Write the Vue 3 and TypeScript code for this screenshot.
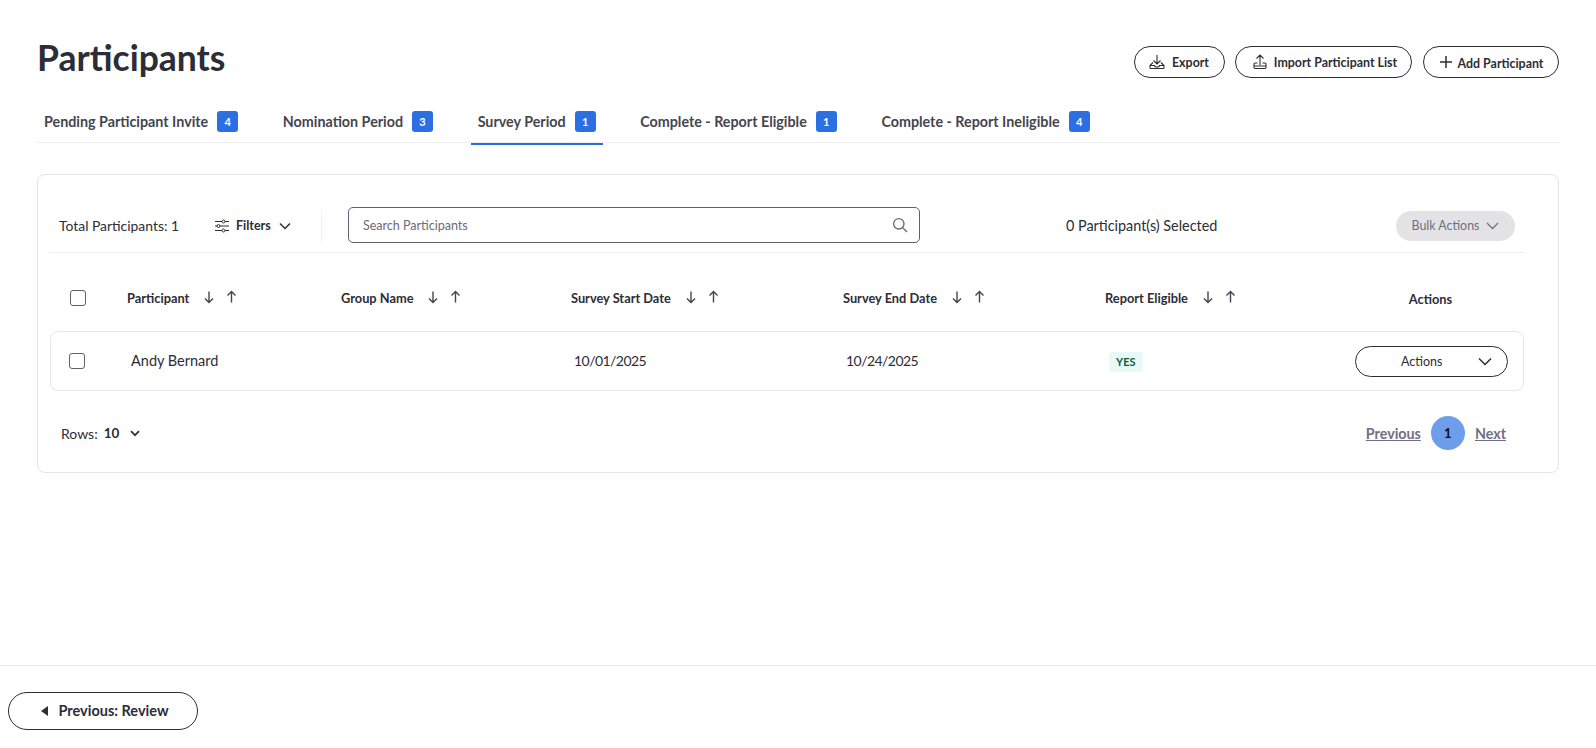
<script setup lang="ts">
const tabs = [
  { label: 'Pending Participant Invite', count: 4 },
  { label: 'Nomination Period', count: 3 },
  { label: 'Survey Period', count: 1, active: true },
  { label: 'Complete - Report Eligible', count: 1 },
  { label: 'Complete - Report Ineligible', count: 4 },
]
const columns = ['Participant', 'Group Name', 'Survey Start Date', 'Survey End Date', 'Report Eligible']
</script>

<template>
  <div class="page">
    <main class="content">
      <header class="top">
        <h1>Participants</h1>
        <div class="top-actions">
          <button class="pill export">
            <svg width="18" height="18" viewBox="0 0 18 18" fill="none" stroke="currentColor" stroke-width="1.1"><path d="M9 2v9M5.500 7.500 9 11l3.500-3.500M5 9.500 2 12.500v2.200c0 .5.300.8.800.8h12.400c.5 0 .8-.3.800-.8v-2.200l-3-3M2 12.500h4.500c0 1 1 1.500 2.500 1.500s2.500-.5 2.500-1.500H16"/></svg>
            Export
          </button>
          <button class="pill import">
            <svg width="18" height="18" viewBox="0 0 18 18" fill="none" stroke="currentColor" stroke-width="1.1"><path d="M9 12V2M5.500 5.500 9 2l3.500 3.500M6.500 10H4.200C3.500 10 3 10.500 3 11.200v3.100c0 .7.500 1.200 1.200 1.200h9.600c.7 0 1.200-.5 1.200-1.200v-3.100c0-.7-.5-1.200-1.200-1.200h-2.300M3 13h12"/></svg>
            Import Participant List
          </button>
          <button class="pill add">
            <svg width="14" height="14" viewBox="0 0 14 14" fill="none" stroke="currentColor" stroke-width="1.500"><path d="M7 1v12M1 7h12"/></svg>
            <span>Add Participant</span>
          </button>
        </div>
      </header>

      <nav class="tabs">
        <div v-for="t in tabs" :key="t.label" class="tab" :class="{ active: t.active }">
          <span>{{ t.label }}</span>
          <span class="count">{{ t.count }}</span>
        </div>
      </nav>

      <section class="card">
        <div class="toolbar">
          <span class="total">Total Participants: 1</span>
          <button class="filters">
            <svg width="16" height="16" viewBox="0 0 16 16" fill="none" stroke="currentColor" stroke-width="1"><path d="M1 3.500h7M11 3.500h4M1 8h2M6 8h9M1 12.500h7M11 12.500h4"/><circle cx="9.500" cy="3.500" r="1.500"/><circle cx="4.500" cy="8" r="1.500"/><circle cx="9.500" cy="12.500" r="1.500"/></svg>
            Filters
            <svg class="filter-caret" width="12" height="8" viewBox="0 0 12 8" fill="none" stroke="currentColor" stroke-width="1.500"><path d="m1 1.500 5 5 5-5"/></svg>
          </button>
          <span class="divider"></span>
          <div class="search">
            <span class="placeholder">Search Participants</span>
            <svg width="16" height="16" viewBox="0 0 16 16" fill="none" stroke="#6b6b7b" stroke-width="1.400"><circle cx="6.800" cy="6.800" r="5.200"/><path d="m10.700 10.700 4.300 4.300"/></svg>
          </div>
          <span class="selected">0 Participant(s) Selected</span>
          <button class="bulk">
            Bulk Actions
            <svg width="13" height="8" viewBox="0 0 13 8" fill="none" stroke="currentColor" stroke-width="1.300"><path d="m1 1 5.500 5.500L12 1"/></svg>
          </button>
        </div>

        <div class="grid head">
          <span class="box head-box"></span>
          <div v-for="c in columns" :key="c" class="th">
            <span>{{ c }}</span>
            <svg width="33" height="14" viewBox="0 0 33 14" fill="none" stroke="#44444f" stroke-width="1.400"><path d="M5 1.500v11M1 8.500l4 4 4-4M27.500 12.500v-11M23.500 5.500l4-4 4 4"/></svg>
          </div>
          <span class="th actions-th">Actions</span>
        </div>

        <div class="grid row">
          <span class="box"></span>
          <span class="name">Andy Bernard</span>
          <span></span>
          <span class="date">10/01/2025</span>
          <span class="date">10/24/2025</span>
          <span><span class="yes">YES</span></span>
          <div class="actions-cell">
            <button class="actions">
              <span>Actions</span>
              <svg width="14" height="9" viewBox="0 0 14 9" fill="none" stroke="currentColor" stroke-width="1.500"><path d="m1 1.500 6 6 6-6"/></svg>
            </button>
          </div>
        </div>

        <div class="pager-row">
          <div class="rows">
            <span>Rows:</span>
            <b>10</b>
            <svg width="10" height="7" viewBox="0 0 10 7" fill="none" stroke="#33333d" stroke-width="1.800"><path d="m1 1.200 4 4 4-4"/></svg>
          </div>
          <div class="pager">
            <a>Previous</a>
            <span class="page-num">1</span>
            <a>Next</a>
          </div>
        </div>
      </section>
    </main>

    <footer class="footer">
      <button class="prev">
        <svg width="8" height="10" viewBox="0 0 8 10" fill="currentColor"><path d="M7 0v10L0 5z"/></svg>
        <span>Previous: Review</span>
      </button>
    </footer>
  </div>
</template>

<style>
html, body { margin: 0; background: #fff; }
</style>

<style scoped>
.page {
  width: 1596px;
  height: 748px;
  display: flex;
  flex-direction: column;
  justify-content: space-between;
  font-family: Lato, "Open Sans", sans-serif;
  color: #2c2d36;
  overflow: hidden;
}
button { font-family: inherit; background: #fff; color: inherit; cursor: pointer; }
.content { padding: 36px 37px 0; }
.top { display: flex; justify-content: space-between; align-items: flex-start; height: 66px; }
h1 { margin: 0; font-size: 35.500px; line-height: 44px; font-weight: 700; color: #2c2d36; }
.top-actions { display: flex; gap: 10px; margin-top: 10px; }
.top-actions .add { margin-left: 1px; }
.pill {
  height: 32px;
  border: 1px solid #2c2d36;
  border-radius: 16px;
  display: flex;
  align-items: center;
  justify-content: center;
  gap: 8px;
  font-size: 12.400px;
  font-weight: 700;
  padding: 0;
}
.export { width: 91px; gap: 6px; padding-right: 2px; }
.import { width: 177px; gap: 5px; padding-left: 1px; }
.add { width: 136px; gap: 5px; }
.add span { padding-top: 2px; }
.tabs {
  display: flex;
  height: 40px;
  border-bottom: 1px solid #eeeef0;
  padding-left: 7px;
  box-sizing: content-box;
}
.tab {
  display: flex;
  align-items: center;
  gap: 9px;
  height: 42px;
  font-size: 14.300px;
  font-weight: 700;
  color: #44454f;
  box-sizing: border-box;
  margin-right: 44.600px;
  padding-bottom: 4px;
  position: relative;
}
.tab.active::after {
  content: "";
  position: absolute;
  left: -7px;
  right: -7px;
  bottom: -1px;
  height: 2px;
  background: #2a6fdb;
}
.count {
  width: 21px;
  height: 21px;
  background: #2c6fe3;
  color: #fff;
  border-radius: 3px;
  font-size: 11px;
  font-weight: 700;
  display: flex;
  align-items: center;
  justify-content: center;
}
.card {
  margin-top: 31px;
  height: 299px;
  box-sizing: border-box;
  border: 1px solid #e4e4e7;
  border-radius: 8px;
  padding: 0 11px;
}
.toolbar {
  display: flex;
  align-items: center;
  height: 78px;
  padding-top: 24px;
  box-sizing: border-box;
  border-bottom: 1px solid #f0f0f2;
  width: 1476px;
  font-size: 13.900px;
}
.total { margin-left: 10px; width: 155px; }
.filters {
  display: flex;
  align-items: center;
  border: 0;
  padding: 0;
  font-size: 12.500px;
  font-weight: 700;
  gap: 6px;
  width: 107px;
}
.filter-caret { margin-left: 2px; }
.divider { width: 1px; height: 32px; background: #f0f0f2; margin-right: 26px; }
.search {
  width: 572px;
  height: 36px;
  margin-top: -2px;
  box-sizing: border-box;
  border: 1px solid #5f5f72;
  border-radius: 5px;
  display: flex;
  align-items: center;
  justify-content: space-between;
  padding: 0 11px 0 14px;
  font-size: 12.500px;
  color: #6b6b7b;
}
.placeholder { padding-top: 2px; }
.selected { margin-left: 146px; font-size: 14.400px; width: 330px; }
.bulk {
  width: 119px;
  height: 30px;
  border: 0;
  border-radius: 15px;
  background: #e3e3e6;
  color: #6f6f7f;
  font-size: 12.400px;
  display: flex;
  align-items: center;
  justify-content: center;
  gap: 7px;
  padding: 0;
}
.grid {
  display: grid;
  grid-template-columns: 77px 214px 230px 272px 262px 200px 1fr;
  align-items: center;
  width: 1474px;
  box-sizing: border-box;
  margin-left: 1px;
}
.head { height: 78px; padding-top: 12px; }
.head-box { margin-left: 20px; }
.box {
  width: 16px;
  height: 16px;
  border: 1px solid #5f5f72;
  border-radius: 3px;
  display: block;
  box-sizing: border-box;
}
.th {
  display: flex;
  align-items: center;
  gap: 15px;
  font-size: 12.800px;
  font-weight: 700;
  color: #2c2d36;
}
.th svg { margin-top: -3px; }
.actions-th { justify-content: center; padding: 1px 0 0 32px; }
.row {
  height: 60px;
  border: 1px solid #e6e6e8;
  border-radius: 8px;
}
.row .box { margin-left: 18px; }
.name { padding: 0 0 2px 3px; font-size: 14.500px; }
.date { padding: 0 0 2px 2px; font-size: 14px; letter-spacing: -0.550px; }
.yes {
  display: inline-block;
  margin-left: 3px;
  padding: 0 7px;
  height: 20px;
  line-height: 20px;
  background: #e8faf5;
  color: #0d5c45;
  border-radius: 3px;
  font-size: 11px;
  font-weight: 700;
}
.actions-cell { display: flex; justify-content: flex-end; padding-right: 15px; }
.actions {
  flex: none;
  width: 153px;
  height: 31px;
  border: 1px solid #2c2d36;
  border-radius: 16px;
  font-size: 12.500px;
  display: flex;
  align-items: center;
  justify-content: space-between;
  padding: 0 15px 0 45px;
}
.pager-row {
  display: flex;
  justify-content: space-between;
  align-items: center;
  padding: 25px 41px 0 12px;
}
.rows { display: flex; align-items: center; font-size: 14px; gap: 6px; }
.rows b { font-size: 13.500px; margin-right: 5px; }
.pager { display: flex; align-items: center; gap: 10px; font-size: 14.300px; font-weight: 700; color: #6f6f85; }
.pager a { text-decoration: underline; }
.page-num {
  width: 34px;
  height: 34px;
  border-radius: 50%;
  background: #6d9eeb;
  color: #0c0c12;
  display: flex;
  align-items: center;
  justify-content: center;
  font-size: 13px;
}
.footer {
  height: 83px;
  border-top: 1px solid #e6e6e8;
  box-sizing: border-box;
  padding: 26px 8px 0;
}
.prev {
  width: 190px;
  height: 38px;
  border: 1px solid #2c2d36;
  border-radius: 19px;
  display: flex;
  align-items: center;
  justify-content: center;
  gap: 9px;
  font-size: 14.500px;
  font-weight: 700;
  padding: 0 0 0 4px;
}
.prev span { padding-bottom: 2px; }
</style>
